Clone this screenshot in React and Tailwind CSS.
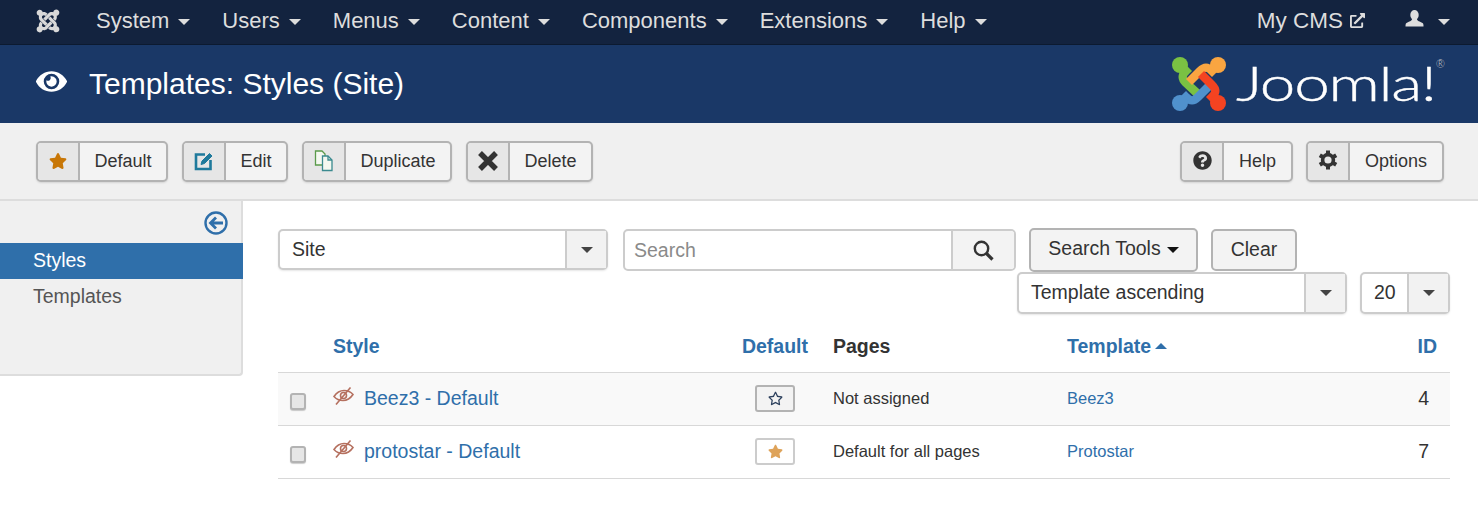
import { FaEye, FaJoomla, FaStar, FaRegStar, FaQuestionCircle, FaExternalLinkAlt } from "react-icons/fa";

const navItems = ["System", "Users", "Menus", "Content", "Components", "Extensions", "Help"];

const Caret = ({ className = "" }) => (
  <span className={`inline-block w-0 h-0 border-x-[6px] border-x-transparent border-t-[6px] ${className}`} />
);

const JoomlaLogo = () => (
  <svg width="54" height="54" viewBox="0 0 54 54" fill="none" strokeWidth="8.5" className="mt-[2px]">
    <path d="M8 8 L14 14 C9 19 10 22 14 26 L26 37" stroke="#7ac143" />
    <circle cx="8" cy="8" r="8" fill="#7ac143" />
    <path d="M46 8 L40 14 C35 9 32 10 28 14 L17 25" stroke="#f9a541" />
    <circle cx="46" cy="8" r="8" fill="#f9a541" />
    <path d="M8 46 L14 40 C19 45 22 44 26 40 L37 29" stroke="#5091cd" />
    <circle cx="8" cy="46" r="8" fill="#5091cd" />
    <path d="M46 46 L40 40 C45 35 44 32 40 28 L29 17" stroke="#f44321" />
    <circle cx="46" cy="46" r="8" fill="#f44321" />
  </svg>
);

const DuplicateIcon = () => (
  <svg width="20" height="22" viewBox="0 0 20 22" fill="none" strokeWidth="1.3">
    <path d="M1.5 1 H8 L11 4 V15 H1.5 Z" stroke="#5a9a4a" fill="#f4f8f0" />
    <path d="M8.5 6 H14 L18 10 V20.5 H8.5 Z" stroke="#3b8a8f" fill="#f4f8f0" />
    <path d="M14 6 V10 H18" stroke="#3b8a8f" />
  </svg>
);

const EditIcon = () => (
  <svg width="20" height="20" viewBox="0 0 20 20" fill="none" stroke="#1f7a9c">
    <path d="M11 3.5 H2 V18 H16.5 V9" strokeWidth="2.6" />
    <path d="M7 13.5 L8 10 L15.5 2.5 L18 5 L10.5 12.5 Z" fill="#1f7a9c" strokeWidth="1" />
  </svg>
);

const DeleteIcon = () => (
  <svg width="20" height="20" viewBox="0 0 20 20" fill="none" stroke="#333" strokeWidth="5.4">
    <path d="M2 2 L18 18 M18 2 L2 18" />
  </svg>
);

const GearIcon = () => (
  <svg width="20" height="20" viewBox="0 0 20 20" fill="none" stroke="#333">
    <circle cx="10" cy="10" r="5.4" strokeWidth="3.6" />
    <path d="M10 0.5 V4 M10 16 V19.5 M1.8 5.2 L4.8 7 M15.2 13 L18.2 14.8 M1.8 14.8 L4.8 13 M15.2 7 L18.2 5.2" strokeWidth="4" />
  </svg>
);

const SearchIcon = () => (
  <svg width="21" height="21" viewBox="0 0 21 21" fill="none" stroke="#333">
    <circle cx="8.5" cy="8.5" r="6.7" strokeWidth="2.4" />
    <path d="M13.5 13.5 L19.5 19.5" strokeWidth="3.2" />
  </svg>
);

const UserIcon = () => (
  <svg width="19" height="17" viewBox="0 0 19 17" fill="#dddddd">
    <ellipse cx="9.5" cy="5" rx="4.2" ry="5" />
    <path d="M7 9 C7 11 4 11.5 1.5 13 C0.5 13.6 0.5 15 0.5 16.5 H18.5 C18.5 15 18.5 13.6 17.5 13 C15 11.5 12 11 12 9 Z" />
  </svg>
);

const EyeOffIcon = () => (
  <svg width="21" height="18" viewBox="0 0 21 18" fill="none" stroke="#b5705f" strokeWidth="1.6" className="mb-[5px] shrink-0">
    <path d="M1 9.5 C4 5 8 3.5 11 3.5 C14 3.5 17.5 4.5 20 7.5 C17 12 13 13.5 10 13.5 C7 13.5 3.5 12.5 1 9.5 Z" />
    <circle cx="10.5" cy="8.5" r="3" />
    <path d="M17.5 0.5 L3 17.5" />
  </svg>
);

const ToolButton = ({ icon, label, textWidth }) => (
  <button className="flex h-[41px] rounded-[5px] border-2 border-[#b3b3b3] bg-[#f3f3f3] shadow-[0_1px_2px_rgba(0,0,0,0.12)] text-[18px] text-[#333]">
    <span className="flex w-[42px] items-center justify-center rounded-l-[3px] border-r-2 border-[#b3b3b3] bg-[#e6e6e6]">{icon}</span>
    <span className={`flex items-center justify-center ${textWidth}`}>{label}</span>
  </button>
);

const SelectBox = ({ value, width, height = "h-[42px]" }) => (
  <div className={`flex ${height} rounded-[5px] border-2 border-[#ccc] bg-white shadow-[0_1px_2px_rgba(0,0,0,0.1)] text-[19.5px] text-[#333] ${width}`}>
    <span className="flex flex-1 items-center pl-3">{value}</span>
    <span className="flex w-[41px] items-center justify-center border-l-2 border-[#ccc] bg-[#f2f2f2]">
      <Caret className="border-t-[#444]" />
    </span>
  </div>
);

const rows = [
  { name: "Beez3 - Default", pages: "Not assigned", template: "Beez3", id: 4, isDefault: false },
  { name: "protostar - Default", pages: "Default for all pages", template: "Protostar", id: 7, isDefault: true },
];

export default function App() {
  return (
    <div className="min-h-[508px] bg-white font-['Liberation_Sans',Arial,sans-serif] overflow-hidden">
      {/* Top nav */}
      <nav className="flex h-[45px] items-center border-b border-[#0c1a30] bg-[#13233f] pb-[3px] text-[22px] text-[#dddddd]">
        <FaJoomla className="ml-[35px] mr-[35px] text-[26px] text-[#d9d9d9]" />
        <ul className="flex flex-1 gap-[32px]">
          {navItems.map((item) => (
            <li key={item} className="flex items-center gap-[9px]">
              {item}
              <Caret className="mt-[2px] border-t-[#dddddd]" />
            </li>
          ))}
        </ul>
        <span className="flex items-center gap-[7px] text-[22.5px]">
          My CMS
          <FaExternalLinkAlt className="text-[15px]" />
        </span>
        <span className="ml-[40px] mb-[4px]"><UserIcon /></span>
        <Caret className="ml-[14px] mr-[28px] mt-[2px] border-t-[#dddddd]" />
      </nav>

      {/* Title bar */}
      <header className="flex h-[78px] items-center bg-[#1a3867] pb-[2px] pl-[36px] pr-[34px] text-white">
        <FaEye className="text-[31px] mb-[4px]" />
        <h1 className="ml-[22px] flex-1 text-[30px]">Templates: Styles (Site)</h1>
        <JoomlaLogo />
        <span className="relative ml-[10px] mr-[9px] w-[199px] font-['Lato',sans-serif] font-light text-[48px] leading-none tracking-[-1px] [-webkit-text-stroke:0.4px_white]">
          <span className="inline-block origin-left scale-x-[1.33]">Joomla!</span>
          <span className="absolute -right-[10px] -top-[1px] text-[11px] tracking-normal text-[#ccc] [-webkit-text-stroke:0]">®</span>
        </span>
      </header>

      {/* Toolbar */}
      <section className="flex h-[78px] items-center border-b-2 border-[#ddd] bg-[#f0f0f0] pl-[36px] pr-[34px]">
        <div className="flex flex-1 gap-[14px]">
          <ToolButton icon={<FaStar className="text-[18px] text-[#c87707]" />} label="Default" textWidth="w-[86px]" />
          <ToolButton icon={<EditIcon />} label="Edit" textWidth="w-[60px]" />
          <ToolButton icon={<DuplicateIcon />} label="Duplicate" textWidth="w-[104px]" />
          <ToolButton icon={<DeleteIcon />} label="Delete" textWidth="w-[81px]" />
        </div>
        <div className="flex gap-[13px]">
          <ToolButton icon={<FaQuestionCircle className="text-[19px] mb-[2px] text-[#333]" />} label="Help" textWidth="w-[67px]" />
          <ToolButton icon={<span className="mb-[2px]"><GearIcon /></span>} label="Options" textWidth="w-[92px]" />
        </div>
      </section>

      <div className="flex">
        {/* Sidebar */}
        <aside className="h-[175px] w-[243px] shrink-0 rounded-br-[4px] border-r-2 border-b-2 border-[#ddd] bg-[#f0f0f0] text-[19.5px]">
          <div className="flex h-[42px] items-center justify-end pr-[13px] pt-[1px]">
            <svg width="24" height="24" viewBox="0 0 24 24" fill="none" stroke="#2f6faa" strokeWidth="2.4">
              <circle cx="12" cy="12" r="10.5" />
              <path d="M19 12 H7 M12 6.5 L6.5 12 L12 17.5" strokeWidth="2.8" />
            </svg>
          </div>
          <div className="-mr-[2px] flex h-[36px] items-center bg-[#2f6faa] pl-[33px] text-white">Styles</div>
          <div className="flex h-[36px] items-center pl-[33px] text-[#555]">Templates</div>
        </aside>

        {/* Main */}
        <main className="flex-1 pl-[35px] pr-[28px] pt-[28px]">
          <div className="flex h-[42px] items-start">
            <SelectBox value="Site" width="w-[330px]" height="h-[41px]" />
            <div className="ml-[15px] flex h-[42px] w-[393px] rounded-[5px] border-2 border-[#ccc] bg-white pt-[1px] text-[19.5px]">
              <span className="flex flex-1 items-center pl-[9px] text-[#8a8a8a]">Search</span>
              <span className="-mt-[1px] flex w-[63px] items-center justify-center rounded-r-[3px] border-l-2 border-[#ccc] bg-[#f3f3f3]">
                <SearchIcon />
              </span>
            </div>
            <button className="-mt-[1px] ml-[13px] flex h-[44px] w-[169px] items-center justify-center gap-[6px] rounded-[5px] border-2 border-[#b3b3b3] bg-[#f3f3f3] pb-[3px] text-[19.5px] text-[#333]">
              Search Tools
              <Caret className="mt-[2px] border-t-[#111]" />
            </button>
            <button className="ml-[13px] h-[42px] w-[86px] rounded-[5px] border-2 border-[#b3b3b3] bg-[#f3f3f3] text-[19.5px] text-[#333]">
              Clear
            </button>
          </div>
          <div className="mt-[1px] flex justify-end gap-[13px]">
            <SelectBox value="Template ascending" width="w-[330px]" />
            <SelectBox value="20" width="w-[90px]" />
          </div>

          <table className="mt-[11px] w-full table-fixed border-collapse">
            <colgroup>
              <col className="w-[55px]" />
              <col className="w-[400px]" />
              <col className="w-[100px]" />
              <col className="w-[234px]" />
              <col />
              <col className="w-[80px]" />
            </colgroup>
            <thead>
              <tr className="h-[47px] border-b border-[#d8d8d8] text-[19.5px] font-bold text-[#2f6faa]">
                <th />
                <th className="pb-[4px] text-left">Style</th>
                <th className="pb-[4px] pr-[25px] text-right">Default</th>
                <th className="pb-[4px] text-left text-[#333]">Pages</th>
                <th className="pb-[4px] text-left">
                  Template
                  <span className="mb-[4px] ml-[4px] inline-block h-0 w-0 border-x-[6px] border-b-[6px] border-x-transparent border-b-[#2f6faa]" />
                </th>
                <th className="pb-[4px] pr-[13px] text-right">ID</th>
              </tr>
            </thead>
            <tbody>
              {rows.map((row, idx) => (
                <tr key={row.id} className={`h-[53px] border-b border-[#d8d8d8] ${idx === 0 ? "bg-[#f9f9f9]" : "bg-white"}`}>
                  <td className="pl-[12px]">
                    <span className="mt-[6px] block h-[17px] w-[16px] rounded-[3px] border-2 border-[#b3b3b3] bg-[#e6e6e6] shadow-[0_1px_1px_rgba(0,0,0,0.2)]" />
                  </td>
                  <td className="text-[19.5px] text-[#2f6faa]">
                    <span className="flex items-center gap-[10px]">
                      <EyeOffIcon />
                      {row.name}
                    </span>
                  </td>
                  <td className="pl-[22px]">
                    <span className={`flex h-[27px] w-[40px] items-center justify-center rounded-[3px] border-2 ${row.isDefault ? "border-[#ccc] bg-white" : "border-[#b3b3b3] bg-[#f3f3f3]"}`}>
                      {row.isDefault ? <FaStar className="text-[15px] text-[#dea35a]" /> : <FaRegStar className="text-[15px] text-[#2b3f5c]" />}
                    </span>
                  </td>
                  <td className="text-[16.5px] text-[#333]">{row.pages}</td>
                  <td className="text-[16.5px] text-[#2f6faa]">{row.template}</td>
                  <td className="pr-[21px] text-right text-[19.5px] text-[#333]">{row.id}</td>
                </tr>
              ))}
            </tbody>
          </table>
        </main>
      </div>
    </div>
  );
}
